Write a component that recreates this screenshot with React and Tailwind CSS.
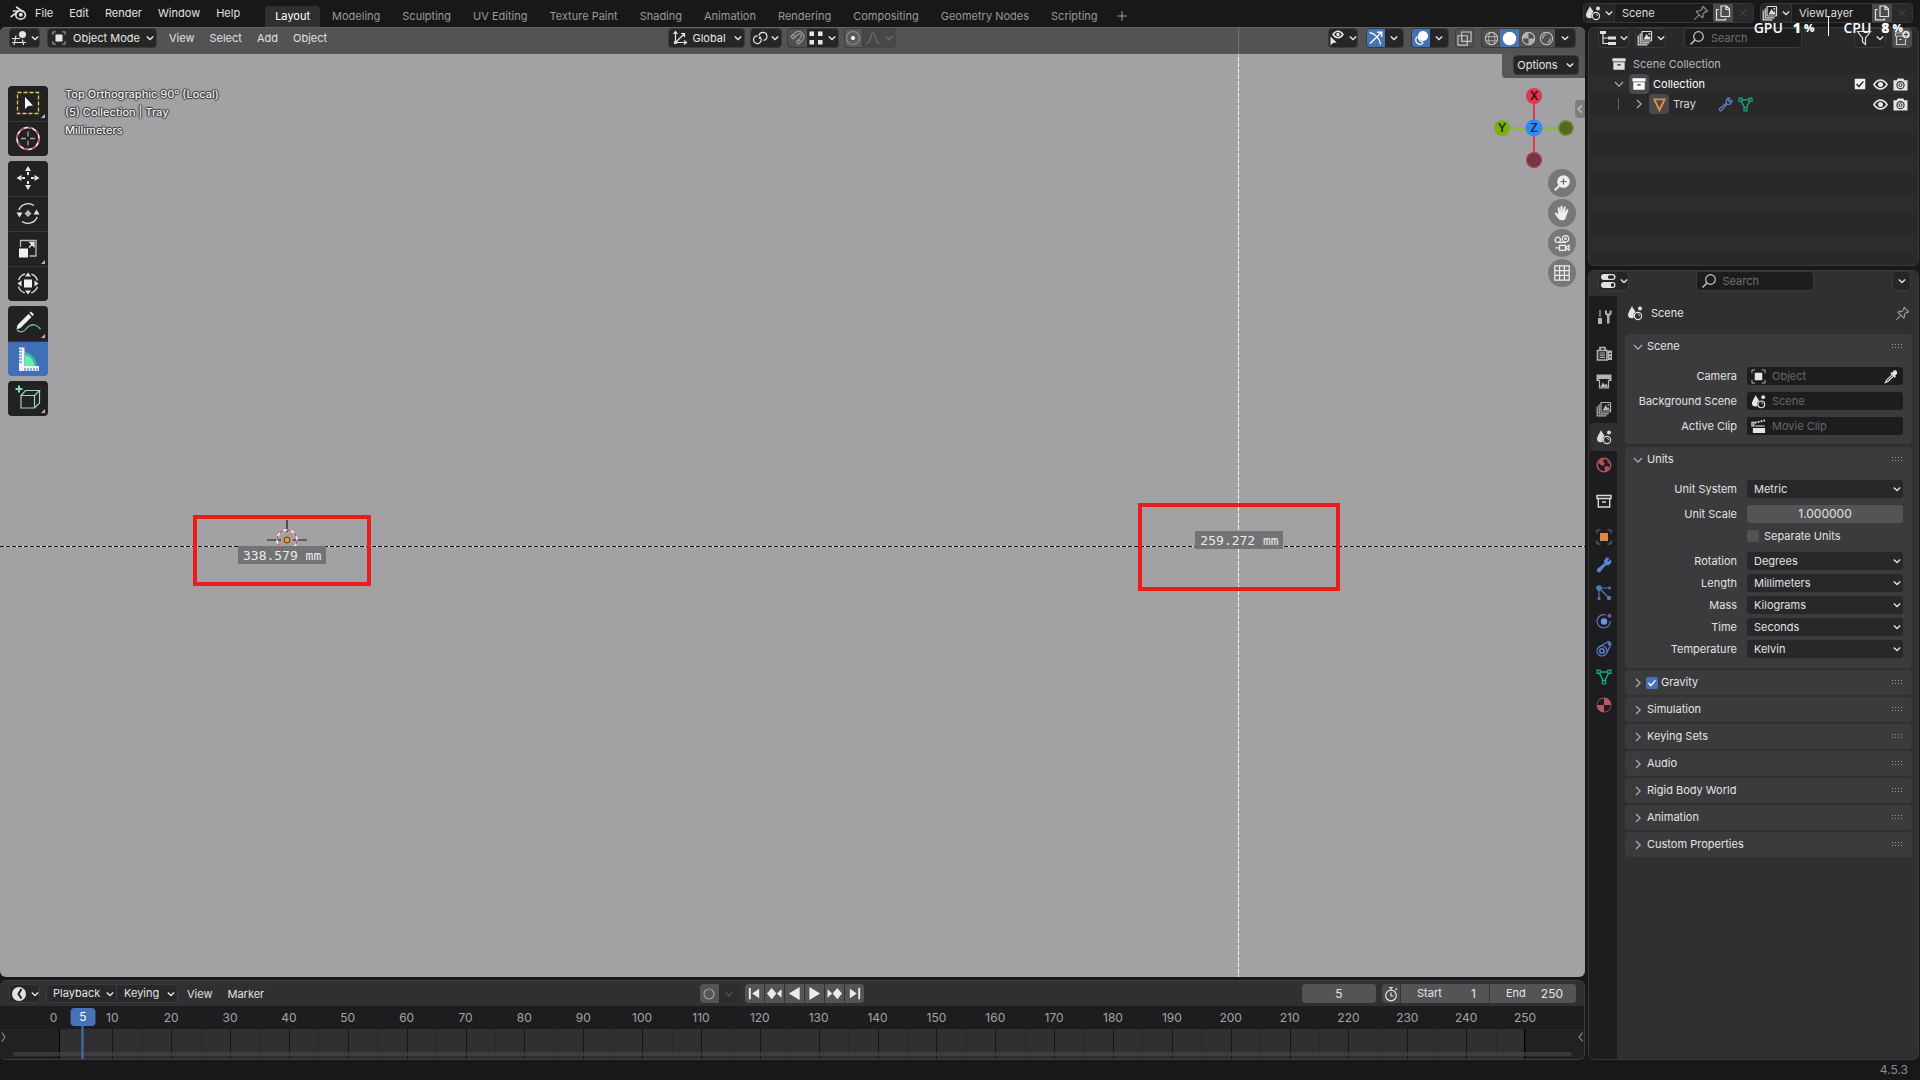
import React from "react";

const Svg = ({ s = 16, className = "", children, ...rest }) => (
  <svg width={s} height={s} viewBox="0 0 16 16" fill="none" stroke="currentColor" strokeWidth="1.2" className={"shrink-0 " + className} aria-hidden="true" {...rest}>
    {children}
  </svg>
);

const ChevD = ({ className = "" }) => (
  <svg width="8" height="8" viewBox="0 0 8 8" fill="none" stroke="currentColor" strokeWidth="1.4" className={"shrink-0 " + className} aria-hidden="true">
    <path d="M0.8 2.4 4 5.6 7.2 2.4" />
  </svg>
);
const ChevPanel = ({ open }) => (
  <svg width="10" height="10" viewBox="0 0 10 10" fill="none" stroke="currentColor" strokeWidth="1.1" className="shrink-0 text-[#b4b4b6]" aria-hidden="true">
    <path d={open ? "M1 3 5 7.2 9 3" : "M3 1 7.2 5 3 9"} />
  </svg>
);

const BlenderLogo = () => (
  <svg width="17" height="15" viewBox="0 0 17 15" fill="none" stroke="#dcdcdc" strokeWidth="1.7" strokeLinecap="round" strokeLinejoin="round" aria-hidden="true">
    <path d="M1.2 10.6 8.6 5H3.4M6.6 1.2l6.6 4.6" />
    <ellipse cx="10.6" cy="8.9" rx="4.8" ry="4.2" />
    <circle cx="10.8" cy="8.8" r="1.1" fill="#dcdcdc" />
  </svg>
);
const SceneIcon = (p) => (
  <Svg {...p}>
    <path d="M5 1C4 3.600 1 7.500 1 10c0 2 1.500 3.300 3.500 3.300 1 0 1.800-.300 2.300-.900C6.300 9.600 7 8 8.600 7 7.500 5 5.700 3 5 1z" fill="currentColor" stroke="none" />
    <circle cx="11" cy="11" r="3.600" />
    <path d="M11 9.300a1.800 1.800 0 0 1 1.700 1.700" strokeWidth=".8" />
    <circle cx="13" cy="3.400" r="2" fill="currentColor" stroke="none" />
  </Svg>
);
const LayersIcon = (p) => (
  <Svg {...p}>
    <rect x="5" y="1.500" width="9.500" height="9.500" rx=".5" />
    <path d="m6.500 9.500 3-5.500 2 3 .8-1 1.500 3.500z" fill="currentColor" stroke="none" />
    <circle cx="12.300" cy="3.900" r=".9" fill="currentColor" stroke="none" />
    <path d="M3.200 3.500v9.300h9.300M1.200 5.500v9.300h9.300" />
  </Svg>
);
const PinIcon = (p) => (
  <Svg {...p}>
    <path d="M10 1.500 14.500 6l-1 .8-1-.3L10 9l.2 2.700-1 1L3.300 6.800l1-1L7 6l2.500-2.500-.3-1zM5.800 10.200 1.300 14.700" />
  </Svg>
);
const CopyIcon = (p) => (
  <Svg {...p}>
    <path d="M6 1h5.500l3 3v7.500H6zM11 1v3.500h3.500M3.800 4.500H1.500v10.300h9v-1.500" />
  </Svg>
);
const CloseIcon = (p) => (
  <Svg {...p}><path d="m4 4 8 8M12 4l-8 8" /></Svg>
);
const View3DIcon = (p) => (
  <Svg {...p}>
    <path d="M1 8.500h8M1 12.500h14M5 5.500 3 15M11.500 9.500l1 5.500" />
    <circle cx="11.500" cy="4.500" r="3.500" fill="currentColor" stroke="none" />
  </Svg>
);
const ObjectIcon = ({ color = "currentColor", ...p }) => (
  <Svg {...p}>
    <rect x="4" y="4" width="8" height="8" fill={color} stroke="none" />
    <path d="M4.500 1H1v3.500M11.500 1H15v3.500M1 11.500V15h3.500M15 11.500V15h-3.500" strokeWidth="1" opacity=".75" />
  </Svg>
);
const AxesIcon = (p) => (
  <Svg {...p}>
    <path d="M3.500 12.500V2M1.500 4l2-2.500 2 2.500M3.500 12.500H14M12 10.500l2.500 2-2.500 2M3.500 12.500 12 4M9 3.500h3.500V7" />
    <circle cx="3.500" cy="12.500" r="1.200" />
  </Svg>
);
const LinkIcon = (p) => (
  <Svg {...p}>
    <path d="M7 5.500a4 4 0 1 1 4.500 4.800M9.200 8.800a3.900 3.900 0 1 1-3.500-3" />
    <circle cx="8" cy="7.800" r="1.300" fill="currentColor" stroke="none" />
  </Svg>
);
const MagnetIcon = (p) => (
  <Svg {...p}>
    <path d="M2 6.500 6.500 2.500a5.300 5.300 0 0 1 7.200 7.600l-4.300 4-2-2.200 4.300-4a2.200 2.200 0 0 0-3.100-3.200L4.200 8.800zM4.300 4.800l2 2.200M9.600 10l2 2.200" />
  </Svg>
);
const GridSnapIcon = (p) => (
  <Svg {...p}>
    <g fill="currentColor" stroke="none">
      <rect x="1.500" y="1.500" width="4.500" height="4.500" /><rect x="10" y="1.500" width="4.500" height="4.500" />
      <rect x="1.500" y="10" width="4.500" height="4.500" /><rect x="10" y="10" width="4.500" height="4.500" />
    </g>
  </Svg>
);
const SearchIcon = (p) => (
  <Svg {...p}><circle cx="9.500" cy="6.500" r="4.800" /><path d="M6 10 1.500 14.500" strokeWidth="1.500" /></Svg>
);
const WrenchIcon = ({ solid, ...p }) => (
  <Svg {...p}>
    <path d="M10.500 1.200 8.600 4 9 6.500 1.500 12.500c-.7.900.9 2.900 2 2.200l6-7.200 2.800.3 2.500-2.500-.2-1.800-2.400 1.600-1.400-1.400 1.700-2.300z" fill={solid ? "currentColor" : "none"} />
  </Svg>
);
const MeshIcon = (p) => (
  <Svg {...p}>
    <path d="M4.500 3h7M3.500 4.500l3.600 7M12.500 4.500l-3.600 7" strokeWidth="1.400" />
    <rect x="1" y="1.200" width="3.200" height="3.200" /><rect x="11.800" y="1.200" width="3.200" height="3.200" /><rect x="6.400" y="11.600" width="3.200" height="3.200" />
  </Svg>
);
const EyeIcon = (p) => (
  <Svg {...p}>
    <path d="M1 8c2-3.300 4.300-4.700 7-4.700S13 4.700 15 8c-2 3.300-4.300 4.700-7 4.700S3 11.300 1 8z" strokeWidth="1.700" />
    <circle cx="8" cy="8" r="2.700" fill="currentColor" stroke="none" />
  </Svg>
);
const CameraIcon = (p) => (
  <Svg {...p}>
    <path d="M5 1.500h6l1 2h3.500v11H.5v-11H4z" fill="currentColor" stroke="none" />
    <circle cx="8" cy="8.700" r="3.800" stroke="#29292b" /><circle cx="8" cy="8.700" r="1.600" stroke="#29292b" strokeWidth="1" />
  </Svg>
);
const BoxIcon = ({ outline, ...p }) => (
  <Svg {...p}>
    {outline ? (
      <path d="M1 2.500h14v3H1zM2.300 5.500v8.500h11.400V5.500M6 9h4" strokeWidth="1.400" />
    ) : (
      <g><path d="M.5 1.500h15v3.500H.5zM1.500 6h13v8.500h-13z" fill="currentColor" stroke="none" /><path d="M6 9h4" stroke="#29292b" strokeWidth="1.500" /></g>
    )}
  </Svg>
);

const Menu = ({ children, className = "" }) => (
  <button className={"text-[11px] leading-4 text-[#e0e0e0] " + className}>{children}</button>
);

const tabs = ["Layout", "Modeling", "Sculpting", "UV Editing", "Texture Paint", "Shading", "Animation", "Rendering", "Compositing", "Geometry Nodes", "Scripting"];

const IdBlock = ({ icon, label, pin, className = "" }) => (
  <div className={"flex h-5 items-center overflow-hidden rounded border border-[#363636] bg-[#1d1d1d] " + className}>
    <button aria-label={"Browse " + label} className="flex h-full w-[31px] items-center justify-center gap-1 border-r border-[#363636] bg-[#262626] text-[#dedede]">{icon}<ChevD /></button>
    <input aria-label={label + " name"} defaultValue={label} className="w-0 min-w-0 flex-1 bg-transparent pl-[7px] text-[11px] text-[#dcdcdc] outline-none" />
    {pin && <button aria-label="Pin" className="mr-1 text-[#8a8a8a]"><PinIcon /></button>}
    <button aria-label="New" className="flex h-full w-5 items-center justify-center bg-[#4c4c4c] text-[#e2e2e2]"><CopyIcon /></button>
    <button aria-label="Remove" className="flex h-full w-5 items-center justify-center bg-[#2a2a2a] text-[#454545]"><CloseIcon s={14} /></button>
  </div>
);

const TopBar = () => (
  <header className="relative flex h-[27px] shrink-0 items-center bg-[#181818] pl-[10px] pr-[7px]">
    <BlenderLogo />
    <nav className="ml-2 flex gap-4 pb-px">
      {["File", "Edit", "Render", "Window", "Help"].map((m) => <Menu key={m}>{m}</Menu>)}
    </nav>
    <div role="tablist" className="ml-[25px] flex items-end gap-[2px] self-end">
      {tabs.map((t, i) => (
        <button key={t} role="tab" aria-selected={i === 0} className={"h-[21px] whitespace-nowrap rounded-t px-[10px] pb-[2px] text-[11px] leading-[18px] " + (i === 0 ? "bg-[#303030] text-white" : "text-[#989898]")}>{t}</button>
      ))}
      <button aria-label="Add workspace" className="flex h-[21px] w-6 items-center justify-center pb-[2px] text-[#989898]"><Svg s={14}><path d="M8 2.500v11M2.500 8h11" /></Svg></button>
    </div>
    <div className="ml-auto flex gap-[6px] pb-px">
      <IdBlock icon={<SceneIcon />} label="Scene" pin className="w-[171px]" />
      <IdBlock icon={<LayersIcon />} label="ViewLayer" className="w-[153px]" />
    </div>
    <div className="absolute right-[17px] top-[14px] z-20 flex h-6 items-center font-['Open_Sans',sans-serif] text-[14px] font-semibold leading-6 text-white">
      <span className="pt-1">GPU</span><b className="ml-[10px] pt-1">1</b><b className="ml-[3px] pt-1 text-[11px]">%</b>
      <span className="mx-[14px] h-5 w-px bg-white" />
      <span className="pt-1">CPU</span><b className="ml-[10px] pt-1">8</b><b className="ml-[3px] pt-1 text-[11px]">%</b>
    </div>
  </header>
);

const dark = "flex h-5 items-center rounded border border-[#3b3b3b] bg-[#262626] text-[#e6e6e6] ";

const ViewHeader = () => (
  <div className="relative z-10 flex h-[27px] items-start rounded-t-[5px] border-t border-[#636363] bg-[#535353] px-[9px]">
    <div className="flex flex-1 items-center">
      <button aria-label="Editor type" className={dark + "w-[31px] justify-center gap-1"}><View3DIcon /><ChevD /></button>
      <label className={dark + "relative ml-[7px] w-[110px] pl-1"}>
        <ObjectIcon s={14} />
        <select aria-label="Mode" className="w-full flex-1 appearance-none bg-transparent pl-[7px] text-[11px] leading-4 outline-none"><option>Object Mode</option></select>
        <ChevD className="pointer-events-none absolute right-[2px]" />
      </label>
      <nav className="ml-3 flex gap-[15px]">{["View", "Select", "Add", "Object"].map((m) => <Menu key={m}>{m}</Menu>)}</nav>
    </div>
    <div className="flex gap-[5px] pr-[22px]">
      <label className={dark + "relative w-[77px] pl-[3px]"}>
        <AxesIcon />
        <select aria-label="Transform orientation" className="w-full flex-1 appearance-none bg-transparent pl-[5px] text-[11px] leading-4 outline-none"><option>Global</option></select>
        <ChevD className="pointer-events-none absolute right-[2px]" />
      </label>
      <button aria-label="Pivot point" className={dark + "w-8 justify-center gap-[3px]"}><LinkIcon /><ChevD /></button>
      <div className={dark + "w-[52px] overflow-hidden"}>
        <button aria-label="Snap" className="flex h-full w-[19px] items-center justify-center bg-[#505050] text-[#979797]"><MagnetIcon /></button>
        <button aria-label="Snap to" className="flex flex-1 items-center justify-center gap-1"><GridSnapIcon /><ChevD /></button>
      </div>
      <div className="flex h-5 w-[52px] items-center overflow-hidden rounded bg-[#474747]">
        <button aria-label="Proportional editing" className="flex h-full w-[19px] items-center justify-center rounded-l border border-[#3f3f3f] bg-[#5a5a5a] text-[#8c8c8c]"><Svg><circle cx="8" cy="8" r="6.500" /><circle cx="8" cy="8" r="2" fill="#fff" stroke="none" /></Svg></button>
        <button aria-label="Falloff" className="flex flex-1 items-center justify-center gap-1 text-[#6e6e6e]"><Svg><path d="M1.500 13.500C6 13.500 5.500 2.500 8 2.500s2 11 6.500 11" /></Svg><ChevD /></button>
      </div>
    </div>
    <div className="flex flex-1 items-center justify-end">
      <button aria-label="Object visibility" className={dark + "w-[30px] justify-center gap-1"}>
        <Svg><path d="M4 4.500C5.500 2.200 7 1.300 9 1.300s3.500.9 5 3.200c-1.500 2.200-3 3.200-5 3.200S5.500 6.700 4 4.500z" strokeWidth="1.500" /><circle cx="9" cy="4.500" r="1.700" fill="currentColor" stroke="none" /><path d="M1.500 6.500v9l2.500-2.600 3.700-.3z" fill="currentColor" stroke="none" /></Svg><ChevD />
      </button>
      <div className={dark + "ml-2 w-[38px] overflow-hidden"}>
        <button aria-label="Show gizmo" className="flex h-full w-[18px] items-center justify-center bg-[#4772b3] text-white"><Svg><path d="M1.500 2.500C7 3.500 12 8.500 12.500 14.500M2 13.500 13 3M9 2.200h4.800V7" strokeWidth="1.400" /></Svg></button>
        <button aria-label="Gizmo options" className="flex flex-1 items-center justify-center"><ChevD /></button>
      </div>
      <div className={dark + "ml-[7px] w-[38px] overflow-hidden"}>
        <button aria-label="Show overlays" className="flex h-full w-[18px] items-center justify-center bg-[#4772b3] text-white"><Svg><circle cx="10" cy="6" r="5" fill="currentColor" stroke="none" /><path d="M4.500 6.500a4.300 4.300 0 1 0 6 6M6 5.500a4.500 4.500 0 0 0 4 6.500" /></Svg></button>
        <button aria-label="Overlay options" className="flex flex-1 items-center justify-center"><ChevD /></button>
      </div>
      <button aria-label="Toggle x-ray" className="ml-[6px] flex h-5 w-[19px] items-center justify-center rounded border border-[#3f3f3f] bg-[#515151] text-[#c8c8c8]"><Svg s={15}><path d="M5 1h10v10H5z" /><path d="M1 5h10v10H1z" /><path d="M5 8v3h3" strokeDasharray="1.500 1" /></Svg></button>
      <div className={dark + "ml-[7px] w-[95px] overflow-hidden"}>
        <button aria-label="Wireframe" className="flex h-full w-[18px] items-center justify-center bg-[#505050] text-[#c0c0c0]"><Svg s={15}><circle cx="8" cy="8" r="6.500" /><path d="M1.500 6h13M1.500 10.500h13M6 1.800c-1.500 4-1.500 8.500 0 12.500M10.500 1.800c1.500 4 1.500 8.500 0 12.500" strokeWidth=".9" /></Svg></button>
        <button aria-label="Solid" className="flex h-full w-[19px] items-center justify-center bg-[#4772b3] text-white"><Svg s={15}><circle cx="8" cy="8" r="7.200" fill="currentColor" stroke="none" /></Svg></button>
        <button aria-label="Material preview" className="flex h-full w-[18px] items-center justify-center bg-[#505050] text-[#c0c0c0]"><Svg s={15}><circle cx="8" cy="8" r="6.500" /><path d="M8 8V1.500A6.500 6.500 0 0 0 1.500 8zM8 8l4.600 4.600A6.500 6.500 0 0 0 14.500 8zM8 8l4.600 4.600A6.500 6.500 0 0 1 8 14.500z" fill="currentColor" stroke="none" opacity=".85" /></Svg></button>
        <button aria-label="Rendered" className="flex h-full w-[18px] items-center justify-center bg-[#505050] text-[#c0c0c0]"><Svg s={15}><circle cx="8" cy="8" r="6.500" /><path d="M8 3.800A4.200 4.200 0 0 0 4 8.500M9 12a4.500 4.500 0 0 0 3.200-4" /></Svg></button>
        <button aria-label="Shading options" className="flex flex-1 items-center justify-center"><ChevD /></button>
      </div>
    </div>
  </div>
);

const T = ({ children, label, active, tip }) => (
  <button aria-label={label} className={"flex h-[35px] w-10 items-start border-t border-[#383838] first:border-t-0 " + (active ? "bg-[#4070b8]" : "bg-[#222222]")}>
    <svg width="40" height="34" viewBox="0 0 40 34" fill="none" stroke="#e4e4e4" strokeWidth="1.300" aria-hidden="true">{children}{tip && <path d="M33 32h4v-4z" fill="#b5b5b5" stroke="none" />}</svg>
  </button>
);
const Group = ({ children }) => <div className="overflow-hidden rounded-[4px]">{children}</div>;

const Toolbar = () => (
  <div role="toolbar" aria-label="Tools" className="absolute left-2 top-[59px] flex flex-col gap-[5px]">
    <Group>
      <T label="Select box" tip><rect x="9.500" y="6.500" width="21" height="21" stroke="#e6c75c" strokeDasharray="4 2" /><path d="M17 11v12l3-3 5-.5z" fill="#fff" stroke="none" /></T>
      <T label="Cursor"><circle cx="20" cy="16.500" r="11" stroke="#f0f0f0" strokeWidth="1.600" /><circle cx="20" cy="16.500" r="11" stroke="#c4405c" strokeWidth="1.600" strokeDasharray="4.300 4.300" /><path d="M20 9.500v5M20 18.500v5M13 16.500h5M22 16.500h5" stroke="#a8a8a8" /></T>
    </Group>
    <Group>
      <T label="Move"><g fill="#e4e4e4" stroke="none"><path d="M20 5l3 5h-6zM20 29l3-5h-6zM8.500 17l5-3v6zM31.500 17l-5-3v6z" /><path d="M19 11h2v3h-2zM19 20h2v3h-2zM14 16h3v2h-3zM23 16h3v2h-3z" /></g></T>
      <T label="Rotate"><path d="M10.800 13A10 10 0 0 1 26 8.500M29.200 20A10 10 0 0 1 14 24.500" /><path d="M8.500 15.500h6l-3 5zM25.500 17.500h6l-3-5z" fill="#e4e4e4" stroke="none" /><path d="M20 13l3.500 3.500-3.500 3.500-3.500-3.500z" fill="#bbb" stroke="none" /></T>
      <T label="Scale" tip><path d="M12.500 15v-6.500h15.500v15.500h-6.500" stroke="#b8b8b8" /><rect x="11" y="16.500" width="9" height="9" fill="#f2f2f2" stroke="none" /><path d="M21 15.500l4-4M22 10.500h4v4z" fill="#eee" /></T>
      <T label="Transform"><circle cx="20" cy="16.500" r="10" strokeDasharray="9 6.700" strokeDashoffset="-3.300" /><path d="M20 5.500l3 4h-6zM20 27.500l3-4h-6zM9.500 16.500l4-3v6zM30.500 16.500l-4-3v6z" fill="#e4e4e4" stroke="none" /><rect x="16" y="12.500" width="8" height="8" fill="#f2f2f2" stroke="none" /></T>
    </Group>
    <Group>
      <T label="Annotate" tip><path d="M8.500 23.500l1-4.500L20.500 8l3 3L12.500 22z" fill="#f0f0f0" stroke="none" /><path d="M21.500 7l1.500-1.500 3 3L24.500 10z" fill="#f0f0f0" stroke="none" /><path d="M9 24c3 3 7 2 9-1s6-5 9-4 4 2 5.500 4" stroke="#6cc4a2" /></T>
      <T label="Measure" active><path d="M17 25V10c7 1 11.500 7 12 15z" fill="#4ee29c" stroke="none" opacity=".55" /><path d="M17 25V13c5 1 9 5 9.500 12z" fill="#62f0ac" stroke="none" /><path d="M11 5.500h5.500V24H31v5H11z" fill="#f2f2f2" stroke="none" /><path d="M11 8h3M11 11h3M11 14h3M11 17h3M11 20h3M17 29v-3M20 29v-3M23 29v-3M26 29v-3M29 29v-3" stroke="#4070b8" strokeWidth="1" /></T>
    </Group>
    <Group>
      <T label="Add cube" tip><g stroke="#9fd4bd" strokeWidth="1.200"><path d="M13 14.500h13.500V27H13zM13 14.500l4.500-5H31.500l-5 5M31.500 9.500V22l-5 5" /></g><path d="M11 4.500v7M7.500 8h7" stroke="#76e3b5" strokeWidth="2" /></T>
    </Group>
  </div>
);

const Gizmo = () => (
  <svg width="84" height="84" viewBox="0 0 84 84" className="absolute right-[9px] top-[59px]" fontFamily="Inter" fontSize="12" fontWeight="600" textAnchor="middle" aria-label="Navigation gizmo">
    <path d="M42 10v64" stroke="#dd3a55" strokeWidth="2" /><path d="M10 42h64" stroke="#8abb2c" strokeWidth="2" />
    <circle cx="42" cy="10" r="8" fill="#e0364f" /><circle cx="42" cy="74" r="7.300" fill="#733541" stroke="#a83649" strokeWidth="1.400" />
    <circle cx="10" cy="42" r="8" fill="#7caf12" /><circle cx="74" cy="42" r="7.300" fill="#516a28" stroke="#73972a" strokeWidth="1.400" />
    <circle cx="42" cy="42" r="8.500" fill="#2f8cf5" />
    <text x="42" y="14.400" fill="#3b0c14">X</text><text x="10" y="46.400" fill="#20310a">Y</text><text x="42" y="46.400" fill="#0d2a50">Z</text>
  </svg>
);

const navIcons = [
  ["Zoom", <g key="z"><circle cx="9.500" cy="6.500" r="6.300" fill="#eee" stroke="none" /><path d="M5.500 10.500.800 15.200" stroke="#eee" strokeWidth="2" /><path d="M9.500 3.500v6M6.500 6.500h6" stroke="#666" /></g>],
  ["Pan", <path key="p" d="M4.500 13.500 1 9c-.5-.8.7-1.600 1.300-1L4.500 9.500 3.800 3c0-1 1.300-1.100 1.500-.1l1 4.600.4-6c.1-1 1.500-1 1.600 0l.3 6 1.400-5.300c.3-1 1.600-.7 1.500.3l-.8 5.600 2-3.300c.5-.9 1.700-.3 1.400.6l-2.500 7c-.5 1.700-1.200 2.600-2.300 2.600H7c-1 0-1.700-.5-2.500-1.500z" fill="#eee" stroke="#eee" strokeWidth=".4" />],
  ["Camera view", <g key="c" stroke="#eee"><circle cx="3.800" cy="4.800" r="2.700" /><circle cx="11.500" cy="3.800" r="3.200" /><circle cx="11.500" cy="3.800" r=".7" fill="#eee" /><path d="M5 7.300h7M5.500 10.300h6v5h-6zM1.500 12.800H5M11.500 12.800l3.500-2.500v5z" /></g>],
  ["Orthographic", <path key="g" d="M.8.800h14.400v14.400H.8zM5.600.8v14.400M10.400.8v14.400M.8 5.600h14.400M.8 10.400h14.400" stroke="#eee" />],
];

const shadow = "[text-shadow:1px_0_1px_#333,-1px_0_1px_#333,0_1px_1px_#333,0_-1px_1px_#333]";
const measure = "absolute flex h-[18px] w-[88px] -translate-x-1/2 items-center justify-center bg-[#737375] pt-px font-['DejaVu_Sans_Mono',monospace] text-[13px] leading-[18px] text-[#ececec]";

const Viewport = () => (
  <section aria-label="3D viewport" className="relative flex-1 overflow-hidden rounded-[6px] bg-[#a2a2a4]">
    <div className="absolute inset-y-0 left-[78.1%] w-px bg-[repeating-linear-gradient(to_bottom,#ffffff_0_4px,#b8b8b8_4px_6px)]" />
    <div className="absolute inset-x-0 top-0 z-20"><ViewHeader /></div>
    <div className="absolute left-[78.1%] top-0 z-30 h-[27px] w-px bg-[#707070]" />
    <div className="absolute right-0 top-[27px] flex h-6 w-[83px] items-start justify-center rounded-bl bg-[#575757] pl-1 pt-px">
      <button className={dark + "w-[66px] justify-center gap-2 text-[11px]"}>Options<ChevD /></button>
    </div>
    <div className={"absolute left-[65px] top-[58px] text-[11px] font-medium leading-[18px] text-[#f2f2f2] " + shadow}>
      <p>Top Orthographic 90º (Local)</p><p>(5) Collection | Tray</p><p>Millimeters</p>
    </div>
    <Toolbar />
    <Gizmo />
    <button aria-label="Show sidebar" className="absolute right-0 top-[73px] flex h-[18px] w-[10px] items-center justify-center rounded-l bg-[#7d7d7f] text-[#c0c0c0]"><Svg s={10}><path d="M11 2 5 8l6 6" strokeWidth="2" /></Svg></button>
    <div className="absolute right-[9px] top-[142px] flex flex-col gap-[2px]">
      {navIcons.map(([l, g]) => <button key={l} aria-label={l} className="flex size-7 items-center justify-center rounded-full bg-[#77777a]"><Svg>{g}</Svg></button>)}
    </div>
    <div className="absolute inset-x-0 top-[519px] h-px bg-[repeating-linear-gradient(to_right,#111_0_4px,#dedede_4px_6px)]" />
    <svg width="42" height="42" viewBox="0 0 42 42" fill="none" className="absolute left-[18.1%] top-[492px] -translate-x-1/2" aria-hidden="true">
      <path d="M21 1v12M21 29v12M1 21h14M27 21h14" stroke="#1a1a1a" strokeWidth="1.200" />
      <circle cx="21" cy="21" r="10" stroke="#f4f4f4" strokeWidth="1.400" /><circle cx="21" cy="21" r="10" stroke="#dc4058" strokeWidth="1.400" strokeDasharray="3.900 3.900" />
      <circle cx="21" cy="21" r="3" fill="#ee9a33" stroke="#5b3a14" />
    </svg>
    <div className={measure + " left-[17.8%] top-[519px]"}>338.579 mm</div>
    <div className={measure + " left-[78.2%] top-[504px]"}>259.272 mm</div>
    <div className="absolute left-[17.8%] top-[488px] h-[71px] w-[178px] -translate-x-1/2 border-4 border-[#e91c1e]" />
    <div className="absolute left-[78.2%] top-[476px] h-[88px] w-[202px] -translate-x-1/2 border-4 border-[#e91c1e]" />
  </section>
);

const PB = ({ label, children }) => (
  <button aria-label={label} className="flex h-[19px] w-[19px] items-center justify-center bg-[#545456] text-[#ececec]"><Svg s={15} fill="currentColor" stroke="none">{children}</Svg></button>
);

const frames = Array.from({ length: 26 }, (_, i) => i * 10);
const pct = (f) => ((53.5 + f * 5.89) / 1585) * 100;
const at = (f) => ({ left: `${pct(f)}%` });
const span = { left: at(1).left, right: `${100 - pct(250)}%` };

const tDark = "flex h-[19px] items-center border border-[#3c3c3e] bg-[#28282a] text-[#e2e2e2] ";

const Timeline = () => (
  <section aria-label="Timeline" className="mt-[3px] h-[80px] shrink-0 overflow-hidden rounded-[6px] border-y border-r border-[#3e3e40] bg-[#1d1d1f]">
    <div className="flex h-[25px] items-center bg-[#303032] pl-[9px] pr-2">
      <div className="flex flex-1 items-center">
        <button aria-label="Editor type" className={tDark + "w-[31px] justify-center gap-1 rounded"}>
          <Svg><circle cx="8" cy="8" r="7" fill="currentColor" stroke="none" /><path d="M10.500 3 7.500 8l3 4.500" stroke="#222" strokeWidth="2" /></Svg><ChevD />
        </button>
        <button className={tDark + "ml-[6px] w-[71px] justify-between rounded-l pl-[6px] pr-[2px] text-[11px]"}>Playback<ChevD /></button>
        <button className={tDark + "w-[61px] justify-between rounded-r border-l-0 pl-[7px] pr-[2px] text-[11px]"}>Keying<ChevD /></button>
        <nav className="ml-[9px] flex gap-[15px]"><Menu>View</Menu><Menu>Marker</Menu></nav>
      </div>
      <div className="flex items-center pr-[22px]">
        <button aria-label="Auto keying" className="flex h-[19px] w-[19px] items-center justify-center rounded-l bg-[#545456] text-[#a0a0a2]"><Svg><circle cx="8" cy="8" r="5" /></Svg></button>
        <button aria-label="Auto keying options" className="flex h-[19px] w-5 items-center justify-center bg-[#2c2c2e] text-[#555]"><ChevD /></button>
        <div className="ml-[6px] flex gap-px overflow-hidden rounded">
          <PB label="Jump to start"><path d="M2 2h2v12H2zM13 3v10L5.500 8z" /></PB>
          <PB label="Previous keyframe"><path d="m5 2 5 6-5 6-5-6zM15.500 3.500v9L10.500 8z" /></PB>
          <PB label="Play reverse"><path d="M13.500 1v14L2 8z" /></PB>
          <PB label="Play"><path d="M2.500 1v14L14 8z" /></PB>
          <PB label="Next keyframe"><path d="m11 2 5 6-5 6-5-6zM.5 3.500v9l5-4.500z" /></PB>
          <PB label="Jump to end"><path d="M12 2h2v12h-2zM3 3v10l7.500-5z" /></PB>
        </div>
      </div>
      <div className="flex flex-1 items-center justify-end text-[11px] text-[#e4e4e4]">
        <input aria-label="Current frame" defaultValue="5" className="h-[19px] w-[74px] rounded bg-[#545456] text-center text-[12px] outline-none" />
        <button aria-label="Use preview range" className="ml-[6px] flex h-[19px] w-[18px] items-center justify-center rounded-l bg-[#4a4a4c]"><Svg><circle cx="8" cy="9.500" r="5.300" /><path d="M8 6.500V10h2.500M6 1.500h4M8 1.500V4M12.500 4l1.500-1.500" /></Svg></button>
        <label className="ml-px flex h-[19px] w-[88px] items-center bg-[#545456] pl-4 pr-[13px]">Start<input defaultValue="1" className="w-0 min-w-0 flex-1 bg-transparent text-right text-[12px] outline-none" /></label>
        <label className="ml-px flex h-[19px] w-[86px] items-center rounded-r bg-[#545456] pl-4 pr-[13px]">End<input defaultValue="250" className="w-0 min-w-0 flex-1 bg-transparent text-right text-[12px] outline-none" /></label>
      </div>
    </div>
    <div className="relative h-[53px]">
      {frames.map((f) => <span key={f} style={at(f)} className="absolute top-1 -translate-x-1/2 text-[12px] leading-4 text-[#a4a4a4]">{f}</span>)}
      <div className="absolute inset-x-0 bottom-0 top-[23px] bg-[#222224]" />
      <div style={span} className="absolute bottom-0 top-[23px] border-x border-black bg-[#303032]" />
      {frames.map((f) => <span key={f} style={at(f)} className={"absolute bottom-0 top-[23px] w-px " + (f ? "bg-[#161617]" : "bg-[#1b1b1c]")} />)}
      {frames.slice(0, 25).map((f) => <span key={f} style={at(f + 5)} className="absolute bottom-0 top-[23px] w-px bg-[#29292b]" />)}
      <div className="absolute bottom-[3px] left-[13px] right-[12px] h-1 rounded bg-[#48484a]/60" />
      <div style={at(5)} className="absolute inset-y-0 flex w-[25px] -translate-x-1/2 flex-col items-center pt-[2px]">
        <span className="flex h-[18px] w-full items-center justify-center rounded bg-[#4772b3] text-[12px] text-white">5</span>
        <span className="w-[2px] flex-1 bg-[#4772b3]" />
      </div>
      <button aria-label="Show channels" className="absolute left-0 top-[26px] text-[#8a8a8a]"><Svg s={10}><path d="m3 1 5 7-5 7" strokeWidth="1.800" /></Svg></button>
      <button aria-label="Show sidebar" className="absolute right-0 top-[26px] text-[#8a8a8a]"><Svg s={10}><path d="m14 1-6 7 6 7" strokeWidth="1.800" /></Svg></button>
    </div>
  </section>
);

const rDark = "flex h-5 items-center justify-center gap-1 rounded border border-[#3b3b3d] bg-[#262628] text-[#e0e0e0] ";
const Search = ({ className = "" }) => (
  <label className={"flex h-5 w-[118px] items-center gap-[6px] rounded border border-[#3b3b3d] bg-[#1d1d1f] pl-1 text-[#c8c8c8] " + className}>
    <SearchIcon /><input aria-label="Search" placeholder="Search" className="w-0 min-w-0 flex-1 bg-transparent text-[11px] outline-none placeholder:text-[#6e6e70]" />
  </label>
);
const OBox = ({ children }) => <span className="flex size-5 items-center justify-center rounded bg-[#4a4a4c]">{children}</span>;

const Outliner = () => (
  <section aria-label="Outliner" className="flex h-[239px] flex-col overflow-hidden rounded-[6px] border border-[#3a3a3c] bg-[#29292b]">
    <div className="flex h-[26px] shrink-0 items-start pl-[9px] pr-[6px]">
      <div className="flex flex-1 gap-[6px]">
        <button aria-label="Editor type" className={rDark + "w-[31px]"}><Svg><g fill="currentColor" stroke="none"><rect x="0" y="1" width="6" height="3" /><rect x="8" y="6.500" width="8" height="3" /><rect x="8" y="12" width="8" height="3" /></g><path d="M3 4v9.500h5M3 8h5" /></Svg><ChevD /></button>
        <button aria-label="Display mode" className={rDark + "w-[31px]"}><LayersIcon /><ChevD /></button>
      </div>
      <Search className="mr-6" />
      <div className="flex flex-1 justify-end gap-[6px]">
        <button aria-label="Filter" className={rDark + "w-8"}><Svg><path d="M1.500 1.500h13L9.500 8v6.500L6.500 12V8z" /></Svg><ChevD /></button>
        <button aria-label="New collection" className="flex size-5 items-center justify-center rounded bg-[#4c4c4e] text-[#c8c8c8]"><Svg><path d="M8 3H1.500v3H10M2.500 6v8.500h9V9M5 9.500h3" /><circle cx="12" cy="4.500" r="3.800" fill="#ddd" stroke="none" /><path d="M12 2.500v4M10 4.500h4" stroke="#444" /></Svg></button>
      </div>
    </div>
    <ul className="flex-1 bg-[repeating-linear-gradient(to_bottom,#29292b_0_20px,#2c2c2e_20px_40px)] text-[11px] leading-5 text-[#d8d8d8]">
      <li className="flex h-5 items-center gap-[7px] pl-[23px] text-[#b8b8ba]"><BoxIcon s={14} className="text-[#e0e0e0]" />Scene Collection</li>
      <li className="flex h-5 items-center pl-[25px] pr-[10px] text-white">
        <ChevPanel open /><span className="ml-[5px]"><OBox><BoxIcon s={14} /></OBox></span><span className="ml-1 flex-1">Collection</span>
        <label className="mr-[7px]">
          <input type="checkbox" aria-label="Include Collection" defaultChecked className="sr-only" />
          <Svg s={12}><rect x="1" y="1" width="14" height="14" rx="1" fill="#f0f0f0" stroke="none" /><path d="m3.500 8 3 3.500 6-7" stroke="#222" strokeWidth="2" /></Svg>
        </label>
        <span className="flex gap-[5px] text-[#e4e4e4]"><button aria-label="Hide Collection"><EyeIcon s={15} /></button><button aria-label="Render Collection"><CameraIcon s={15} /></button></span>
      </li>
      <li className="flex h-5 items-center pl-[29px] pr-[10px]">
        <span className="h-3 w-px bg-[#606062]" /><span className="ml-[15px]"><ChevPanel /></span>
        <span className="ml-[5px]"><OBox><Svg s={15}><path d="M2.500 2.500h11L8 14z" stroke="#e0914c" strokeWidth="2" /></Svg></OBox></span>
        <span className="ml-1">Tray</span><WrenchIcon s={15} className="ml-[22px] text-[#6a86cc]" /><MeshIcon s={15} className="ml-[5px] text-[#17b183]" />
        <span className="ml-auto flex gap-[5px] text-[#e4e4e4]"><button aria-label="Hide Tray"><EyeIcon s={15} /></button><button aria-label="Render Tray"><CameraIcon s={15} /></button></span>
      </li>
    </ul>
  </section>
);

const Grip = () => (
  <svg width="12" height="5" viewBox="0 0 12 5" fill="#9a9a9c" className="ml-auto" aria-hidden="true">
    {[0, 3, 6, 9].map((x) => <React.Fragment key={x}><rect x={x + 1} y="0" width="1" height="1" /><rect x={x + 1} y="3" width="1" height="1" /></React.Fragment>)}
  </svg>
);

const Panel = ({ title, open, check, children }) => (
  <section className="rounded-[4px] bg-[#3b3a3d]">
    <h3 className="flex h-[25px] items-center pl-2 pr-[9px] text-[11px] text-[#e4e4e4]">
      <button className="flex items-center" aria-expanded={!!open} aria-label={title}><ChevPanel open={open} /></button>
      {check ? (
        <label className="ml-[3px] flex items-center gap-[3px]">
          <input type="checkbox" defaultChecked className="sr-only" />
          <Svg s={12}><rect x="0" y="0" width="16" height="16" rx="2" fill="#4772b3" stroke="none" /><path d="m3.500 8 3 3.500 6-7" stroke="#fff" strokeWidth="2" /></Svg>{title}
        </label>
      ) : <span className="ml-1">{title}</span>}
      <Grip />
    </h3>
    {children}
  </section>
);

const Row = ({ label, children }) => (
  <label className="grid grid-cols-[112px_1fr] items-center gap-[10px] pr-[9px] text-right text-[11px] leading-[18px] text-[#e2e2e2]">
    <span className="whitespace-nowrap">{label}</span>
    <span className="relative flex h-[18px] items-center text-left">{children}</span>
  </label>
);
const IdField = ({ icon, text, pick }) => (
  <span className="flex h-[18px] w-full items-center rounded-[3px] bg-[#1d1d1f] px-1 text-[#e4e4e4]">
    {icon}<input placeholder={text} className="ml-[6px] w-0 min-w-0 flex-1 bg-transparent outline-none placeholder:text-[#68686a]" />
    {pick && <Svg s={15}><path d="M10 1.800c2-1.800 5.200 1 3.700 3.600L12 7l.6 1.200-1.400 1L6.800 4.800l1-1.400 1.200.6z" fill="currentColor" stroke="none" /><path d="M8.300 6.500 3 11.500l-1.500 3L4.500 13l5.200-5" /></Svg>}
  </span>
);
const Drop = ({ value }) => (
  <>
    <select className="h-[18px] w-full appearance-none rounded-[3px] bg-[#28282a] pl-[7px] text-[#e2e2e2] outline-none"><option>{value}</option></select>
    <ChevD className="pointer-events-none absolute right-[2px] text-[#e0e0e0]" />
  </>
);

const g = "#b4b4b6";
const propTabs = [
  ["Tool", g, <><path d="M4 1v7" /><path d="M2 9h4v2H2z" fill={g} stroke="none" /><path d="M4 10v5" strokeWidth="4" /><path d="M9 1v4l2 2v7.500h2.500V7l2-2V1l-2 1v2.500h-2.500V2z" fill={g} stroke="none" /></>, "mb-2"],
  ["Render", g, <><path d="M1.500 5.500h9.500V15H1.500zM4 5V2.500h5V5" strokeWidth="1.600" /><path d="M3.500 8h5.500M3.500 10.200h5.500M3.500 12.400h5.500" /><path d="M12 5.500h4V15h-4z" fill={g} stroke="none" /><path d="M13 8.500h2M13 12h2" stroke="#1d1d1f" /></>, ""],
  ["Output", g, <><path d="M.5 1.500h15V8H13V6H3v2H.5z" fill={g} stroke="none" /><path d="M3.500 7v8h9V7" /><path d="m4 14.500 3-5 2 2.500 1.500-1.500 1.500 4z" fill={g} stroke="none" /></>, ""],
  ["View layer", g, "layers", ""],
  ["Scene", "#d8d8da", "scene", ""],
  ["World", "#b4505c", <><circle cx="8" cy="8" r="6.800" strokeWidth="1.500" /><path d="M3 4c2-2 4-2 5-1.500L7 5l2 1-1 2.500H5.500L3 6.500zM8.500 9.500l3.500-.5 1.500 2-3 3H9zM11 3l3 3-2 .5z" fill="#b4505c" stroke="none" /></>, "mb-2"],
  ["Collection", "#d8d8da", "box", "mb-2"],
  ["Object", "#8c8c8e", "object", ""],
  ["Modifiers", "#5b85d4", "wrench", ""],
  ["Particles", "#5577bd", <><circle cx="3" cy="3" r="2.800" fill="#5577bd" stroke="none" /><path d="M5 3h8M3 5v8M4.500 4.500l7 7" /><circle cx="13.500" cy="3" r="1.500" fill="#5577bd" stroke="none" /><circle cx="3" cy="13.500" r="1.500" fill="#5577bd" stroke="none" /><circle cx="13" cy="13" r="2.200" fill="#5577bd" stroke="none" /></>, ""],
  ["Physics", "#5577bd", <><path d="M10 2A6.600 6.600 0 1 0 14.300 8" /><circle cx="8" cy="8.500" r="3.200" fill="#6a93e0" stroke="none" /><circle cx="13.500" cy="2.800" r="2" fill="#6f5ca8" stroke="none" /></>, ""],
  ["Constraints", "#5b7fca", <><circle cx="6" cy="10" r="5" /><circle cx="6" cy="10" r="2.200" strokeWidth="1.600" /><path d="M2.500 6.300 11.500 1c2-1 4.200 1 3 3.200L10.700 12" /><circle cx="13" cy="3" r=".8" /></>, ""],
  ["Data", "#17b183", "mesh", ""],
  ["Material", "#b85866", <><circle cx="8" cy="8" r="6.800" /><path d="M8 1.200V8H1.200A6.800 6.800 0 0 1 8 1.200zM8 8h6.800A6.800 6.800 0 0 1 8 14.800z" fill="#1d1d1f" stroke="none" /><path d="M8 1.200A6.800 6.800 0 0 1 14.800 8H8zM8 14.800A6.800 6.800 0 0 1 1.200 8H8z" fill="#b85866" stroke="none" /></>, ""],
];
const tabIcon = (k) => ({ layers: <LayersIcon />, scene: <SceneIcon />, box: <BoxIcon outline />, object: <ObjectIcon color="#d98a4a" />, wrench: <WrenchIcon solid />, mesh: <MeshIcon /> }[k]);

const Properties = () => (
  <section aria-label="Properties" className="mt-1 flex min-h-0 flex-1 flex-col overflow-hidden rounded-[6px] border border-[#3a3a3c] bg-[#303032]">
    <div className="flex h-[25px] shrink-0 items-start pl-[9px] pr-[7px]">
      <div className="flex flex-1">
        <button aria-label="Editor type" className={rDark + "w-[31px]"}><Svg><path d="M4 1h8.500a3 3 0 0 1 0 6H4a3 3 0 0 1 0-6zM4 9h8.500a3 3 0 0 1 0 6H4a3 3 0 0 1 0-6z" fill="currentColor" stroke="none" /><rect x="8" y="2.300" width="6" height="3.400" rx="1.500" fill="#222" stroke="none" /><rect x="11" y="10.300" width="3" height="3.400" rx="1" fill="#222" stroke="none" /></Svg><ChevD /></button>
      </div>
      <Search />
      <div className="flex flex-1 justify-end"><button aria-label="Options" className={rDark + "w-[19px]"}><ChevD /></button></div>
    </div>
    <div className="flex min-h-0 flex-1">
      <div role="tablist" aria-label="Property tabs" className="w-7 shrink-0 bg-[#1d1d1f] pl-px pt-[7px]">
        {propTabs.map(([l, c, ic, m]) => (
          <button key={l} role="tab" aria-label={l} aria-selected={l === "Scene"} style={{ color: c }} className={"flex h-7 w-[27px] items-center justify-center rounded-l " + m + (l === "Scene" ? " bg-[#303032]" : "")}>
            {typeof ic === "string" ? tabIcon(ic) : <Svg>{ic}</Svg>}
          </button>
        ))}
      </div>
      <div className="min-w-0 flex-1 pl-2 pr-[6px]">
        <div className="mb-1 flex h-[34px] items-center pl-[2px] pr-[2px] text-[11px] text-[#e4e4e4]"><SceneIcon /><span className="ml-2">Scene</span><button aria-label="Pin" className="ml-auto text-[#9a9a9c]"><PinIcon s={15} /></button></div>
        <div className="flex flex-col gap-[2px]">
          <Panel title="Scene" open>
            <div className="flex flex-col gap-[7px] pb-[9px] pt-2">
              <Row label="Camera"><IdField icon={<ObjectIcon s={15} />} text="Object" pick /></Row>
              <Row label="Background Scene"><IdField icon={<SceneIcon s={15} />} text="Scene" /></Row>
              <Row label="Active Clip"><IdField icon={<Svg s={15}><path d="M2 9.500h13V15H2z" fill="currentColor" stroke="none" /><path d="M1 3.500h2v4H1zM4.500 7.500h10" /><path d="m4 4 11-2.500" strokeWidth="2" strokeDasharray="2 1.200" /></Svg>} text="Movie Clip" /></Row>
            </div>
          </Panel>
          <div className="pt-px">
          <Panel title="Units" open>
            <div className="flex flex-col pb-[10px] pt-2">
              <Row label="Unit System"><Drop value="Metric" /></Row>
              <div className="mt-[7px]"><Row label="Unit Scale"><input defaultValue="1.000000" className="h-[18px] w-full rounded-[3px] bg-[#545456] text-center text-[12px] outline-none" /></Row></div>
              <label className="ml-[122px] mt-[7px] flex h-3 items-center gap-[5px] text-[11px] text-[#e2e2e2]"><input type="checkbox" className="size-3 appearance-none rounded-[2px] bg-[#545456]" />Separate Units</label>
              <div className="mt-[10px] flex flex-col gap-1">
                <Row label="Rotation"><Drop value="Degrees" /></Row>
                <Row label="Length"><Drop value="Millimeters" /></Row>
                <Row label="Mass"><Drop value="Kilograms" /></Row>
                <Row label="Time"><Drop value="Seconds" /></Row>
                <Row label="Temperature"><Drop value="Kelvin" /></Row>
              </div>
            </div>
          </Panel>
          </div>
          <Panel title="Gravity" check />
          {["Simulation", "Keying Sets", "Audio", "Rigid Body World", "Animation", "Custom Properties"].map((t) => <Panel key={t} title={t} />)}
        </div>
      </div>
    </div>
  </section>
);

export default function App() {
  return (
    <div className="flex h-screen flex-col overflow-hidden bg-[#18181a] font-['Inter',sans-serif] text-[11px]">
      <TopBar />
      <main className="flex min-h-0 flex-1 gap-[3px] pr-px">
        <div className="flex min-w-0 flex-1 flex-col"><Viewport /><Timeline /></div>
        <aside className="flex w-[331px] shrink-0 flex-col"><Outliner /><Properties /></aside>
      </main>
      <footer className="flex h-5 shrink-0 items-center justify-end pr-3 text-[12px] text-[#8c8c8c]">4.5.3</footer>
    </div>
  );
}
